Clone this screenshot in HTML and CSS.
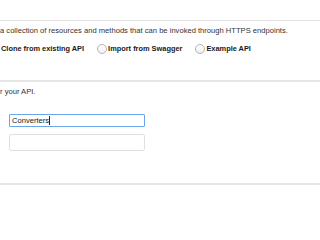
FILE: index.html
```html
<!DOCTYPE html>
<html>
<head>
<meta charset="utf-8">
<link rel="stylesheet" href="styles.css">
</head>
<body>
<div class="page">
  <div class="top-space"></div>
  <section class="panel intro">
    <p class="desc">a collection of resources and methods that can be invoked through HTTPS endpoints.</p>
    <div class="choices">
      <label class="choice first"><span class="label">Clone from existing API</span></label>
      <label class="choice"><span class="radio"></span><span class="label">Import from Swagger</span></label>
      <label class="choice"><span class="radio"></span><span class="label">Example API</span></label>
    </div>
  </section>
  <section class="panel settings">
    <p class="desc">r your API.</p>
    <div class="fields">
      <div class="field focused"><span class="value">Converters</span><span class="caret"></span></div>
      <div class="field tall"></div>
    </div>
  </section>
  <div class="rule"></div>
</div>
</body>
</html>
```

FILE: styles.css
```css
html, body {
  margin: 0;
  padding: 0;
  background: #ffffff;
}
body {
  font-family: "Liberation Sans", Arial, sans-serif;
  font-size: 7.6px;
  color: #333333;
  width: 320px;
  height: 214px;
  overflow: hidden;
}
.page {
  display: flex;
  flex-direction: column;
}
.top-space {
  height: 20px;
}
.panel {
  border-top: 1px solid #e2e2e2;
}
.intro {
  padding: 5px 0 26px 0;
}
.desc {
  margin: 0;
  line-height: 10px;
  color: #333333;
  white-space: nowrap;
}
.choices {
  display: flex;
  align-items: center;
  margin-top: 8px;
  height: 10px;
  gap: 13px;
  font-size: 7.4px;
}
.choice {
  display: flex;
  align-items: center;
  gap: 1px;
  font-weight: bold;
  color: #1a1a1a;
  line-height: 10px;
}
.choice.first {
  margin-left: 1px;
}
.radio {
  width: 8px;
  height: 8px;
  border: 1px solid #b4b4b4;
  border-radius: 50%;
  background: linear-gradient(#ffffff, #f0f0f0);
  box-sizing: content-box;
}
.settings {
  border-top: 2px solid #e6e6e6;
  padding: 5px 0 32px 0;
}
.fields {
  display: flex;
  flex-direction: column;
  gap: 7px;
  margin: 17px 0 0 9px;
  width: 136px;
}
.field {
  box-sizing: border-box;
  border: 1px solid #e0e0e0;
  border-radius: 2px;
  height: 17px;
  display: flex;
  align-items: center;
  padding: 0 2px;
}
.field.focused {
  height: 13px;
  border-color: #6aa6e8;
  border-radius: 1px;
  color: #1a1a1a;
}
.caret {
  display: inline-block;
  width: 1px;
  height: 9px;
  background: #222222;
}
.rule {
  height: 2px;
  background: #e6e6e6;
}
```
